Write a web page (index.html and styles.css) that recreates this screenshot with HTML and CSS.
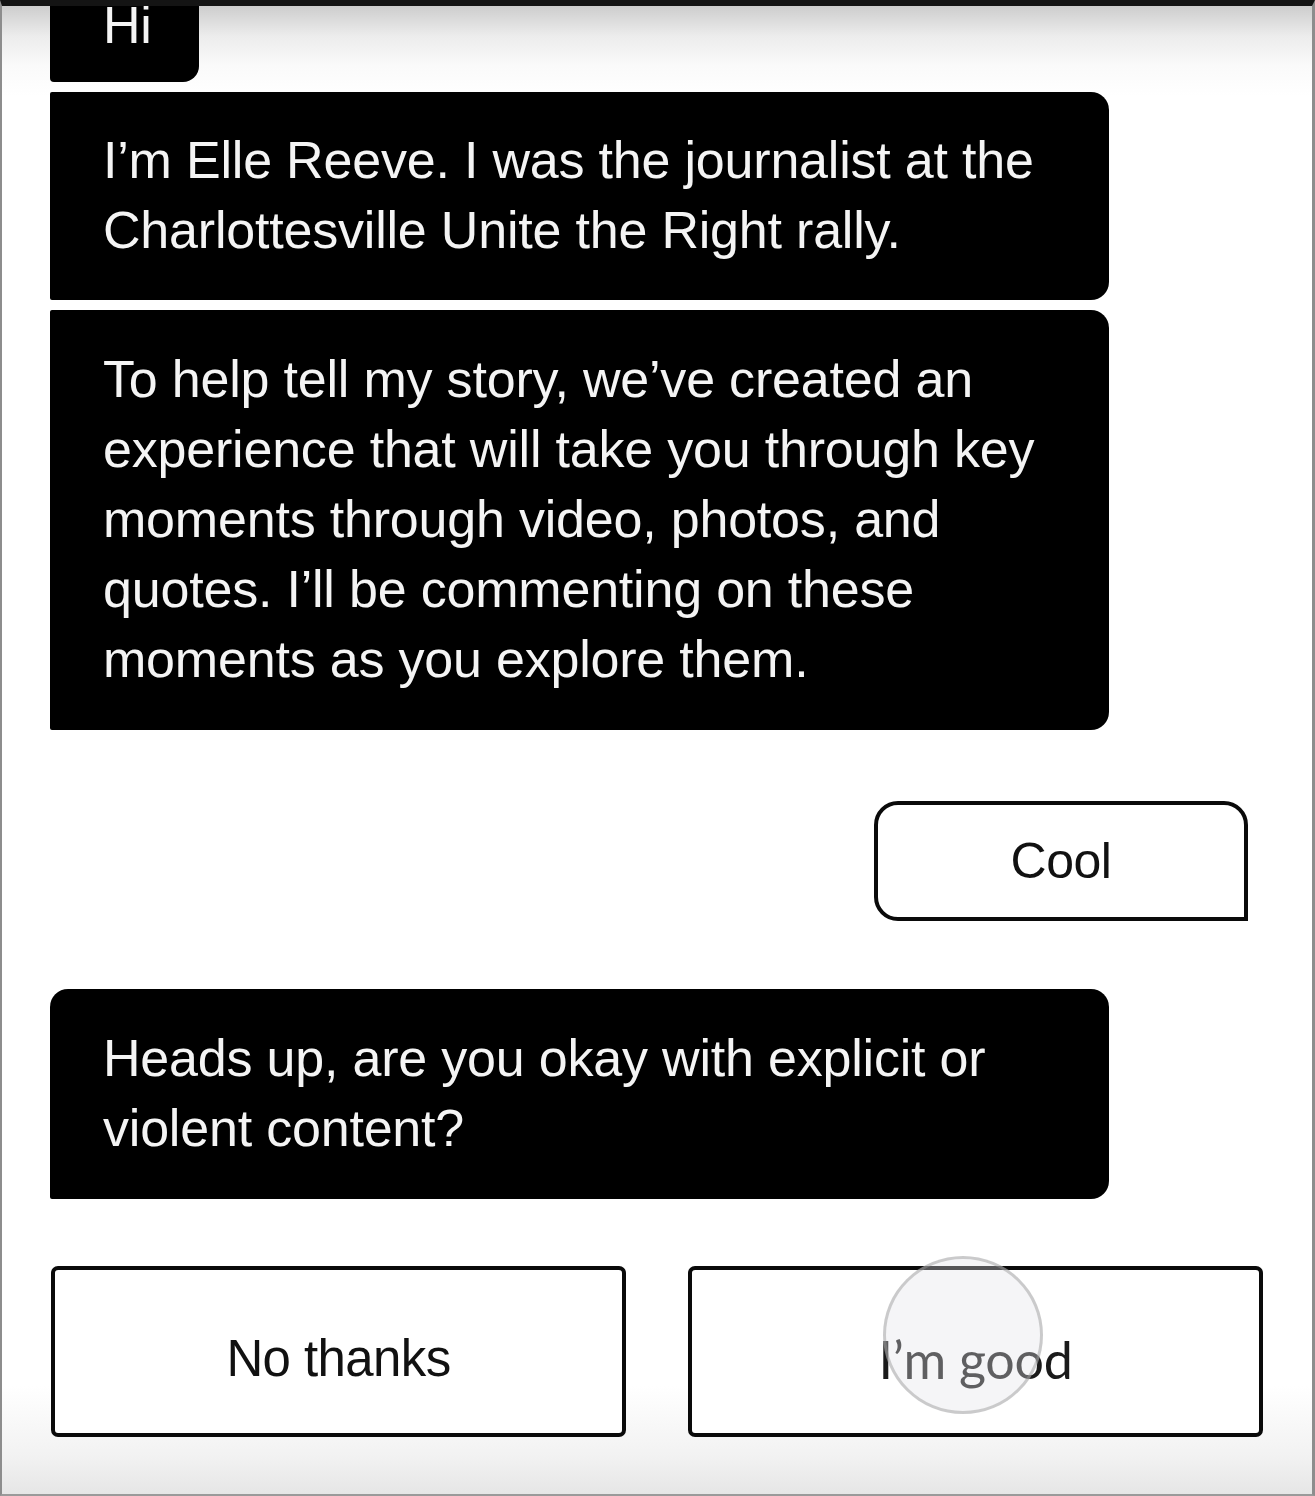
FILE: index.html
```html
<!DOCTYPE html>
<html lang="en">
<head>
<meta charset="utf-8">
<title>Chat</title>
<link rel="stylesheet" href="styles.css">
</head>
<body>
<div class="screen">
  <div class="chat">
    <div class="bubble bubble-hi">Hi</div>
    <div class="bubble bubble-mid">I’m Elle Reeve. I was the journalist at the<br>Charlottesville Unite the Right rally.</div>
    <div class="bubble bubble-mid">To help tell my story, we’ve created an<br>experience that will take you through key<br>moments through video, photos, and<br>quotes. I’ll be commenting on these<br>moments as you explore them.</div>
    <div class="reply-row">
      <div class="reply">Cool</div>
    </div>
    <div class="bubble bubble-first">Heads up, are you okay with explicit or<br>violent content?</div>
    <div class="choices">
      <div class="choice">No thanks</div>
      <div class="choice choice-alt">I’m good<span class="touch"></span></div>
    </div>
  </div>
</div>
</body>
</html>
```

FILE: styles.css
```css
* { box-sizing: border-box; }
html, body { margin: 0; padding: 0; background: #fff; }
body { font-family: "Liberation Sans", Arial, sans-serif; }

.screen {
  width: 1315px;
  height: 1496px;
  overflow: hidden;
  border-top: 6px solid #141414;
  border-left: 2px solid #8d8d8d;
  border-right: 3px solid #8d8d8d;
  border-bottom: 2px solid #9a9a9a;
  background: linear-gradient(to bottom, #cdcdcd 0px, #ececec 30px, #fafafa 60px, #ffffff 90px, #ffffff 1380px, #f2f2f2 1450px, #e6e6e6 100%);
}

.chat {
  display: flex;
  flex-direction: column;
  padding-left: 48px;
}

.bubble {
  width: 1059px;
  background: #000;
  color: #f4f4f4;
  font-size: 52px;
  line-height: 70px;
  letter-spacing: -0.2px;
  padding: 33px 30px 33px 53px;
  border-radius: 2px 18px 18px 2px;
}

.bubble-hi {
  width: 149px;
  height: 92px;
  margin-top: -16px;
  padding: 0 0 0 53px;
  line-height: 70px;
  border-radius: 0 0 16px 4px;
  margin-bottom: 10px;
}

.bubble-mid { margin-bottom: 10px; }
.bubble-mid:nth-of-type(2) { height: 208px; }
.bubble-mid:nth-of-type(3) { height: 420px; padding-top: 34px; margin-bottom: 0; }

.bubble-first {
  height: 210px;
  padding-top: 34px;
  border-radius: 18px 18px 18px 2px;
}

.reply-row {
  display: flex;
  justify-content: flex-end;
  padding-right: 64px;
  margin: 71px 0 68px;
}

.reply {
  width: 374px;
  height: 120px;
  border: 4px solid #0a0a0a;
  border-radius: 24px 24px 0 24px;
  display: flex;
  align-items: center;
  justify-content: center;
  font-size: 50px;
  letter-spacing: -0.5px;
  color: #111;
  background: #fff;
}

.choices {
  display: flex;
  gap: 62px;
  margin-top: 67px;
  padding-left: 1px;
}

.choice {
  position: relative;
  width: 575px;
  height: 171px;
  border: 4px solid #0a0a0a;
  border-radius: 7px;
  display: flex;
  align-items: center;
  justify-content: center;
  padding-top: 14px;
  font-size: 51px;
  letter-spacing: -0.6px;
  color: #111;
  background: #fff;
}

.choice-alt {
  font-family: "Lato", sans-serif;
  font-size: 52px;
  letter-spacing: -0.3px;
  color: #1a1a1a;
}

.touch {
  position: absolute;
  left: 191px;
  top: -14px;
  width: 160px;
  height: 158px;
  border-radius: 50%;
  border: 3px solid rgba(150, 150, 150, 0.45);
  background: rgba(225, 225, 232, 0.35);
}
```
